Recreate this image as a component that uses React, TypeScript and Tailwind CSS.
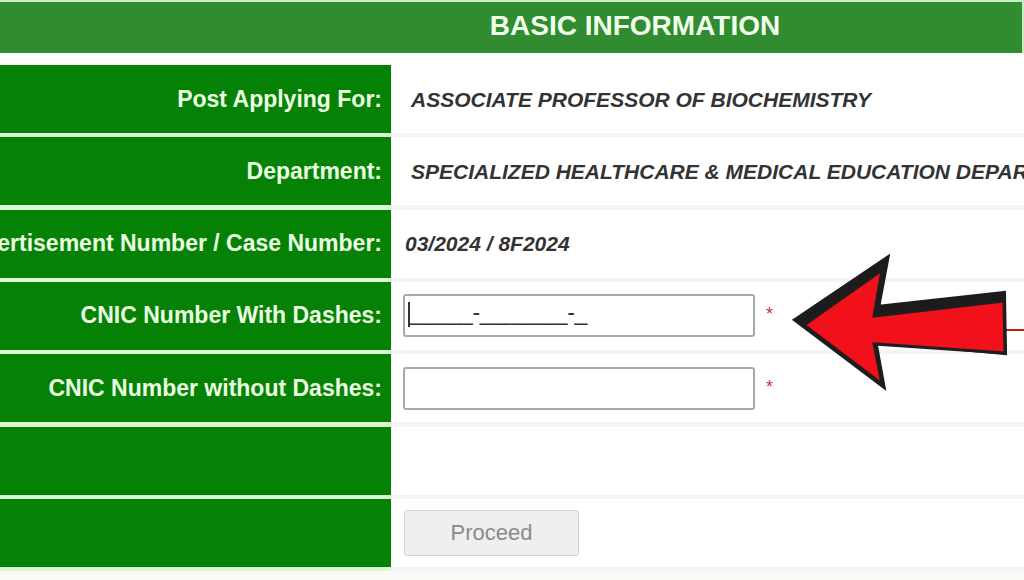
import React from "react";

const rows: { label: string; kind: "text" | "text2" | "input" | "mask" | "empty" | "button"; value?: string }[] = [
  { label: "Post Applying For:", kind: "text", value: "ASSOCIATE PROFESSOR OF BIOCHEMISTRY" },
  { label: "Department:", kind: "text", value: "SPECIALIZED HEALTHCARE & MEDICAL EDUCATION DEPARTMENT" },
  { label: "Advertisement Number / Case Number:", kind: "text2", value: "03/2024 / 8F2024" },
  { label: "CNIC Number With Dashes:", kind: "mask" },
  { label: "CNIC Number without Dashes:", kind: "input" },
  { label: "", kind: "empty" },
  { label: "", kind: "button" },
];

function Row({ r }: { r: (typeof rows)[number] }) {
  return (
    <div className="flex flex-col">
      <div className="flex h-[68px]">
        <div className="w-[391px] shrink-0 bg-[#058205] flex items-center justify-end pr-[9px] overflow-hidden">
          <span className="whitespace-nowrap text-[23px] font-bold text-[#ecffe2] leading-none">{r.label}</span>
        </div>
        <div className="flex-1 flex items-center bg-white overflow-hidden">
          {r.kind === "text" && (
            <span className="pl-[20px] whitespace-nowrap text-[21px] font-bold italic text-[#333333] leading-none">
              {r.value}
            </span>
          )}
          {r.kind === "text2" && (
            <span className="pl-[14px] whitespace-nowrap text-[21px] font-bold italic text-[#333333] leading-none">
              {r.value}
            </span>
          )}
          {(r.kind === "mask" || r.kind === "input") && (
            <div className="flex items-start pl-[12px]">
              <div className="w-[352px] h-[43px] border-2 border-[#a8a8a8] rounded-[3px] bg-white flex items-center pl-[3px] relative">
                {r.kind === "mask" && (
                  <>
                    <span className="w-[2px] h-[25px] bg-[#333] -mt-[2px]" />
                    <span className="text-[23px] text-[#333] leading-none tracking-[-0.3px] -mt-[6px]">_____-_______-_</span>
                  </>
                )}
              </div>
              <span className="ml-[11px] mt-[11px] text-[18px] text-[#d03030] leading-none">*</span>
            </div>
          )}
          {r.kind === "button" && (
            <div className="pl-[13px]">
              <div className="w-[175px] h-[46px] rounded-[3px] border border-[#d4d4d4] bg-[#efefef] flex items-center justify-center">
                <span className="text-[22px] text-[#8a8a8a] leading-none">Proceed</span>
              </div>
            </div>
          )}
        </div>
      </div>
      <div className="flex h-[4.33px]">
        <div className="w-[391px] shrink-0 bg-[#dcf6d2]" />
        <div className="flex-1 bg-[#f5f6f3]" />
      </div>
    </div>
  );
}

export default function App() {
  return (
    <div
      className="relative w-[1024px] h-[580px] overflow-hidden bg-[#f8fbf5]"
      style={{ fontFamily: '"Liberation Sans", Arial, sans-serif' }}
    >
      <div className="h-[2px] bg-[#c9ecc2]" />
      <div className="h-[51px] bg-[#318b31] flex items-center justify-center border-r-2 border-[#c9ecc2]">
        <span className="text-[28px] font-bold text-[#f0ffea] leading-none ml-[248px] -mt-[3px]">BASIC INFORMATION</span>
      </div>
      <div className="h-[12px] bg-white" />
      <div className="flex flex-col">
        {rows.map((r, i) => (
          <Row key={i} r={r} />
        ))}
      </div>

      <svg className="absolute left-0 top-0 pointer-events-none" width="1024" height="580" viewBox="0 0 1024 580">
        <line x1="1006" y1="330" x2="1024" y2="330" stroke="#c41a1a" strokeWidth="2" />
        <polygon
          points="797,320 886,260 877,308 1003,294 1004,352 874,340 882,384"
          fill="#1c1c1c"
          stroke="#1c1c1c"
          strokeWidth="6"
          strokeLinejoin="miter"
        />
        <polygon
          points="804,325 882,270 874,316 1004,301 1005,353 874,344 882,384"
          fill="#f2101b"
          stroke="#1e1e1e"
          strokeWidth="3"
          strokeLinejoin="miter"
        />
      </svg>
    </div>
  );
}
